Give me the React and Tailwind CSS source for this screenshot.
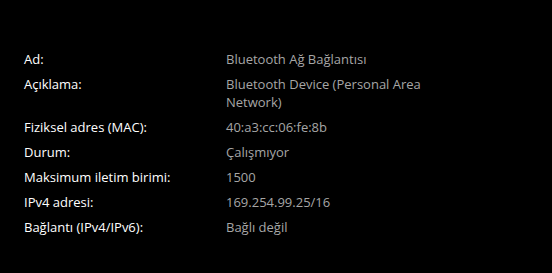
const rows = [
  ['Ad:', 'Bluetooth Ağ Bağlantısı'],
  ['Açıklama:', 'Bluetooth Device (Personal Area Network)'],
  ['Fiziksel adres (MAC):', '40:a3:cc:06:fe:8b'],
  ['Durum:', 'Çalışmıyor'],
  ['Maksimum iletim birimi:', '1500'],
  ['IPv4 adresi:', '169.254.99.25/16'],
  ['Bağlantı (IPv4/IPv6):', 'Bağlı değil'],
];

export default function App() {
  return (
    <div
      className="w-[552px] h-[273px] bg-black pt-[50px] pl-6"
      style={{ fontFamily: '"Open Sans", "Noto Sans", sans-serif' }}
    >
      <div className="flex flex-col gap-[7px] text-[13px] leading-[18px]">
        {rows.map(([label, value]) => (
          <div key={label} className="flex">
            <div className="w-[202px] shrink-0 text-white">{label}</div>
            <div className="w-[200px] text-[#a6a6a6]">{value}</div>
          </div>
        ))}
      </div>
    </div>
  );
}
